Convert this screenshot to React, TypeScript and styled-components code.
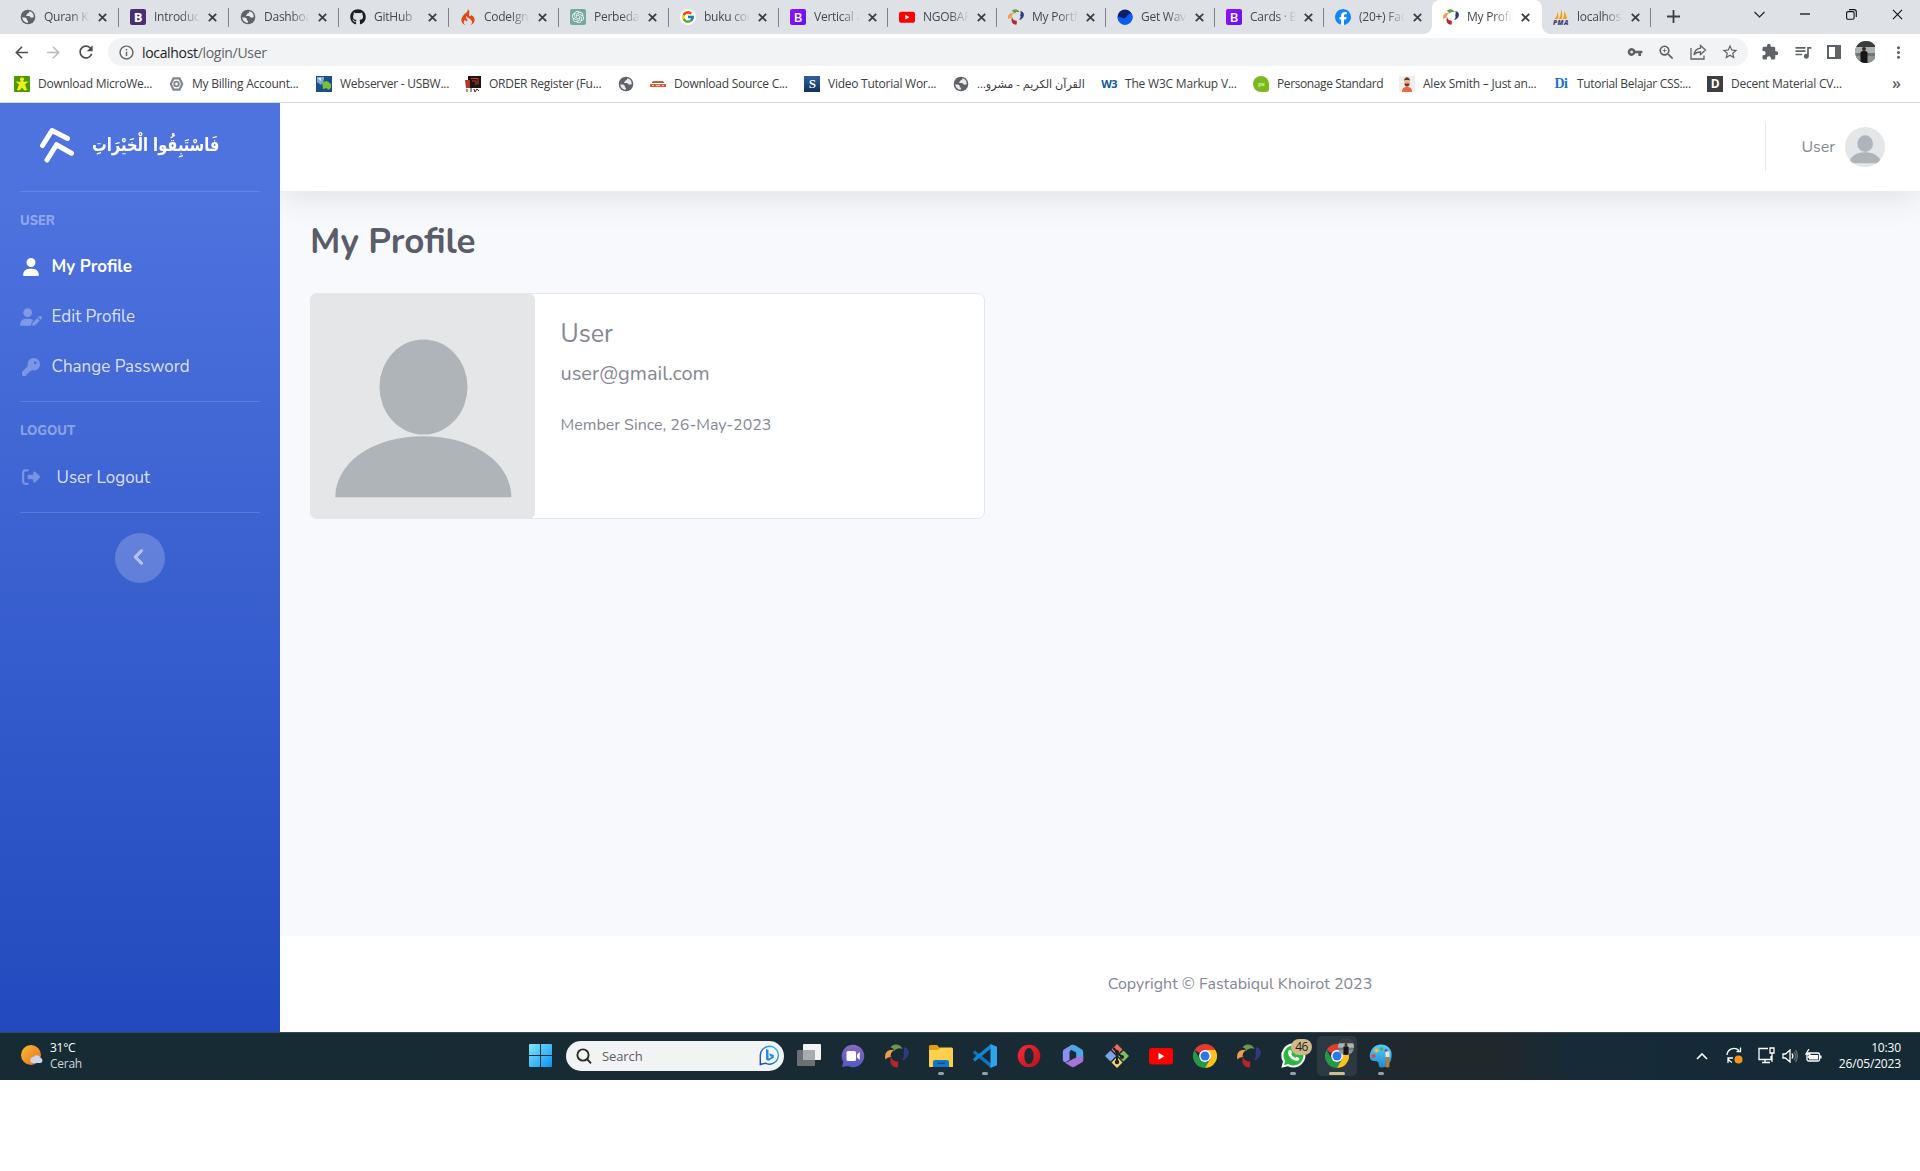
import React from 'react';
import styled, { createGlobalStyle, css } from 'styled-components';
import {
  MdArrowBack, MdArrowForward, MdRefresh, MdInfoOutline, MdVpnKey, MdZoomIn, MdStarBorder,
  MdExtension, MdQueueMusic, MdMoreVert,
} from 'react-icons/md';
import { FaUser, FaUserPen, FaKey, FaRightFromBracket, FaAngleLeft, FaGithub, FaFacebook } from 'react-icons/fa6';
import { FcGoogle } from 'react-icons/fc';
import { SiCodeigniter, SiOpenai } from 'react-icons/si';

const uiFont = `'Segoe UI', 'Open Sans', 'Noto Sans', sans-serif`;
const pageFont = `'Nunito', 'Lato', sans-serif`;

const GlobalStyle = createGlobalStyle`
  *, *::before, *::after { box-sizing: border-box; }
  body { margin: 0; background: #fff; font-family: ${uiFont}; }
  svg { display: block; flex-shrink: 0; }
`;

const Screen = styled.div`
  width: 1920px;
  height: 1171px;
  display: flex;
  flex-direction: column;
  background: #fff;
  overflow: hidden;
`;

/* ---------- Browser chrome ---------- */

const TabStrip = styled.div`
  height: 34px;
  flex: none;
  display: flex;
  background: #dee1e6;
  padding-left: 8px;
`;

const Tab = styled.div<{ $w: number; $active?: boolean; $line: boolean }>`
  position: relative;
  width: ${p => p.$w}px;
  flex: none;
  height: 34px;
  display: flex;
  align-items: center;
  padding: 0 7px 0 11px;
  gap: 8px;
  &:first-child { padding-left: 12px; }
  ${p => p.$active && css`
    background: #fff;
    border-radius: 8px 8px 0 0;
    &::before, &::after {
      content: '';
      position: absolute;
      bottom: 0;
      width: 8px;
      height: 8px;
    }
    &::before { left: -8px; background: radial-gradient(circle at 0 0, transparent 7.5px, #fff 8px); }
    &::after { right: -8px; background: radial-gradient(circle at 100% 0, transparent 7.5px, #fff 8px); }
  `}
  ${p => p.$line && css`
    background: linear-gradient(#80848a, #80848a) right 0 top 8px / 1px 19px no-repeat;
  `}
`;

const TabTitle = styled.span`
  width: 46px;
  flex: none;
  font-size: 12px;
  line-height: 16px;
  letter-spacing: -0.25px;
  color: #45494d;
  white-space: nowrap;
  overflow: hidden;
  mask-image: linear-gradient(90deg, #000 58%, transparent 100%);
`;

const Spacer = styled.div`
  flex: 1;
`;

const WindowButton = styled.div<{ $w: number; $h?: number }>`
  width: ${p => p.$w}px;
  height: ${p => p.$h ?? 28}px;
  display: flex;
  align-items: center;
  justify-content: center;
`;

const Toolbar = styled.div`
  height: 36px;
  flex: none;
  display: flex;
  align-items: center;
  padding: 0 12px 0 12px;
  color: #5f6368;
`;

const NavButton = styled.div<{ $dim?: boolean }>`
  width: 32px;
  display: flex;
  justify-content: flex-start;
  color: ${p => (p.$dim ? '#babcbe' : '#4a4d51')};
`;

const Omnibox = styled.div`
  width: 1641px;
  height: 28px;
  border-radius: 14px;
  background: #f1f3f4;
  display: flex;
  align-items: center;
  padding: 0 9px 0 10px;
  font-size: 14px;
  color: #5f6368;
`;

const Url = styled.span`
  margin-left: 7px;
  letter-spacing: -0.32px;
  b { font-weight: 400; color: #202124; }
`;

const OmniIcons = styled.div`
  margin-left: auto;
  display: flex;
  gap: 14px;
  align-items: center;
`;

const ToolIcons = styled.div`
  margin-left: 13px;
  display: flex;
  align-items: center;
  gap: 14px;
  svg:last-child { margin-left: -2px; }
`;

const ProfilePhoto = styled.div`
  width: 22px;
  height: 22px;
  border-radius: 50%;
  overflow: hidden;
`;

const BookmarkBar = styled.div`
  height: 33px;
  flex: none;
  display: flex;
  align-items: center;
  padding: 0 0 5px 14px;
  border-bottom: 1px solid #d5d8dc;
`;

const Bookmark = styled.div<{ $w: number }>`
  width: ${p => p.$w}px;
  flex: none;
  display: flex;
  align-items: center;
  gap: 8px;
`;

const BookmarkLabel = styled.span<{ $ls: number; $rtl?: boolean }>`
  font-size: ${p => (p.$rtl ? 11.2 : 12)}px;
  line-height: 16px;
  white-space: nowrap;
  letter-spacing: ${p => p.$ls}px;
  color: #3c4043;
  direction: ${p => (p.$rtl ? 'rtl' : 'ltr')};
  font-family: ${p => (p.$rtl ? `'Open Sans', 'DejaVu Sans', sans-serif` : uiFont)};
`;

const More = styled.span`
  margin: -2px 0 0 47px;
  font-size: 16px;
  font-weight: 600;
  line-height: 16px;
  color: #5f6368;
`;

/* ---------- Page ---------- */

const Page = styled.div`
  height: 929px;
  flex: none;
  display: flex;
  font-family: ${pageFont};
  color: #858796;
`;

const Sidebar = styled.nav`
  width: 280px;
  flex: none;
  display: flex;
  flex-direction: column;
  padding: 0 20px;
  background: linear-gradient(180deg, #4e73df 10%, #224abe 100%);
`;

const Brand = styled.div`
  height: 88px;
  flex: none;
  display: flex;
  align-items: center;
  padding: 0 0 4px 19px;
  gap: 17px;
`;

const BrandText = styled.span`
  direction: rtl;
  font: 700 18px/30px 'DejaVu Sans', sans-serif;
  color: #fff;
  white-space: nowrap;
  transform: scaleX(0.815);
  transform-origin: 0 50%;
`;

const Divider = styled.hr<{ $mt?: number }>`
  width: 240px;
  height: 1px;
  flex: none;
  border: 0;
  margin: ${p => p.$mt ?? 0}px 0 0;
  background: rgba(255, 255, 255, 0.15);
`;

const SideHeading = styled.div`
  height: 50px;
  flex: none;
  padding-top: 20px;
  font-size: 13px;
  line-height: 18px;
  font-weight: 800;
  color: rgba(255, 255, 255, 0.4);
`;

const SideLink = styled.a<{ $active?: boolean; $indent?: boolean }>`
  height: ${p => (p.$indent ? 52 : 50)}px;
  flex: none;
  display: flex;
  align-items: center;
  gap: ${p => (p.$indent ? 14.5 : 9.5)}px;
  font-size: 17px;
  line-height: 24px;
  white-space: nowrap;
  font-weight: ${p => (p.$active ? 700 : 400)};
  color: ${p => (p.$active ? '#fff' : 'rgba(255,255,255,0.8)')};
  svg { color: ${p => (p.$active ? '#fff' : 'rgba(255,255,255,0.3)')}; }
`;

const LinkIcon = styled.span<{ $up?: number }>`
  width: 22px;
  padding-bottom: ${p => p.$up ?? 0}px;
  display: flex;
  justify-content: center;
`;

const Toggle = styled.button`
  width: 50px;
  height: 50px;
  flex: none;
  margin: 20px auto 0;
  padding: 0 3px 3px 0;
  border: 0;
  border-radius: 50%;
  display: flex;
  align-items: center;
  justify-content: center;
  background: rgba(255, 255, 255, 0.2);
  color: rgba(255, 255, 255, 0.5);
  svg { stroke: currentColor; stroke-width: 14px; }
`;

const Main = styled.main`
  flex: 1;
  display: flex;
  flex-direction: column;
  background: #f8f9fc;
  overflow: hidden;
`;

const Topbar = styled.header`
  height: 88px;
  flex: none;
  display: flex;
  align-items: center;
  justify-content: flex-end;
  padding: 0 35px 0 0;
  background: #fff;
  box-shadow: 0 3px 35px rgba(58, 59, 69, 0.15);
`;

const TopDivider = styled.div`
  width: 1px;
  height: 48px;
  margin-right: 35.5px;
  background: #e3e6f0;
`;

const TopUser = styled.span`
  margin-right: 10px;
  font-size: 16px;
`;

const RoundAvatar = styled.div`
  width: 40px;
  height: 40px;
  border-radius: 50%;
  overflow: hidden;
`;

const Content = styled.section`
  flex: 1;
  padding: 30px 30px;
`;

const Title = styled.h1`
  margin: 0 0 30px;
  height: 42px;
  font-size: 35px;
  line-height: 42px;
  font-weight: 700;
  color: #5a5c69;
`;

const Card = styled.div`
  width: 675px;
  height: 226px;
  display: flex;
  border: 1px solid #e3e6f0;
  border-radius: 7px;
  background: #fff;
`;

const CardImage = styled.div`
  width: 225px;
  height: 226px;
  margin: -1px 0 0 -1px;
  border-radius: 7px;
  overflow: hidden;
  flex: none;
`;

const CardBody = styled.div`
  padding: 25px 25px 25px 25.5px;
`;

const CardName = styled.h5`
  margin: 0 0 10px;
  font-size: 25px;
  line-height: 30px;
  font-weight: 400;
`;

const CardText = styled.p<{ $size: number; $lh: number; $mb: number }>`
  margin: 0 0 ${p => p.$mb}px;
  font-size: ${p => p.$size}px;
  line-height: ${p => p.$lh}px;
`;

const Footer = styled.footer`
  height: 96px;
  flex: none;
  display: flex;
  align-items: center;
  justify-content: center;
  padding-left: 280px;
  background: #fff;
  font-size: 16px;
`;

/* ---------- Taskbar ---------- */

const Taskbar = styled.div`
  height: 48px;
  flex: none;
  display: flex;
  align-items: center;
  padding-bottom: 2px;
  border-top: 1px solid #3b474e;
  background: linear-gradient(90deg, #172b34 0%, #182b34 45%, #192a34 68%, #20282b 74%, #20282b 78%, #162a38 82%, #142a34 100%);
  color: #fff;
  font-size: 12px;
`;

const Weather = styled.div`
  width: 529px;
  padding-left: 20px;
  display: flex;
  align-items: center;
  gap: 6px;
  line-height: 16px;
  letter-spacing: -0.25px;
  span { display: block; color: #cfd6d9; }
`;

const SearchBox = styled.div`
  width: 218px;
  height: 30px;
  margin-left: 14px;
  margin-right: 3px;
  border-radius: 15px;
  background: #f1f3f5;
  display: flex;
  align-items: center;
  padding: 0 4px 0 10px;
  font-size: 13px;
  letter-spacing: -0.1px;
  color: #5f6062;
  span { margin-left: 10px; flex: 1; }
`;

const TaskButton = styled.div<{ $active?: boolean }>`
  position: relative;
  width: 40px;
  height: 40px;
  margin: 0 2px;
  border-radius: 5px;
  display: flex;
  align-items: center;
  justify-content: center;
  background: ${p => (p.$active ? 'rgba(255,255,255,0.08)' : 'transparent')};
`;

const RunMark = styled.i<{ $active?: boolean }>`
  position: absolute;
  bottom: 1px;
  left: 50%;
  width: ${p => (p.$active ? 16 : 6)}px;
  height: 3px;
  border-radius: 2px;
  transform: translateX(-50%);
  background: ${p => (p.$active ? '#d3bd8c' : '#9aa1a5')};
`;

const Badge = styled.b`
  position: absolute;
  left: 18px;
  top: 3px;
  width: 21px;
  height: 16px;
  border-radius: 8px;
  background: #cdb888;
  color: #1d1b16;
  font-size: 12px;
  font-weight: 400;
  line-height: 16px;
  text-align: center;
  letter-spacing: -0.6px;
`;

const MiniPhoto = styled.div`
  position: absolute;
  left: 21px;
  top: 3px;
  width: 16px;
  height: 16px;
  border-radius: 50%;
  overflow: hidden;
`;

const Tray = styled.div`
  margin-left: auto;
  padding-right: 19px;
  display: flex;
  align-items: center;
`;

const TrayIcon = styled.div<{ $mr: number }>`
  margin-right: ${p => p.$mr}px;
`;

const Clock = styled.div`
  width: 79px;
  text-align: right;
  line-height: 16px;
  letter-spacing: -0.15px;
  white-space: nowrap;
`;

/* ---------- Drawings ---------- */

const GlobeMark = () => (
  <svg width="16" height="16" viewBox="0 0 16 16">
    <circle cx="8" cy="8" r="7.3" fill="#5f6368" />
    <path d="M2.3 8.2c2 .2 3.600.2 4.300 1.300s-.3 1.600.8 2c.9.3.6 1.500.4 2.300C4.700 13.600 2.300 11.200 2.300 8.200zM9.500 2.300c-.4 1-.3 1.900-1.600 2-1 .1-.5 1.500-1.500 1.600-.6.1-.4 1 .2 1.100 1.500.2 2.800-.2 3.500.8.5.9 1.200 1 2.200.8.7-.1 1.200-.2 1.400-.7A5.800 5.800 0 0 0 9.500 2.300z" fill="#e8eaed" />
  </svg>
);

const NewBs = styled.span`
  width: 16px;
  height: 16px;
  flex: none;
  border-radius: 2px;
  background: linear-gradient(135deg, #9013fe, #6610f2);
  color: #fff;
  font: 600 13px/16px 'Open Sans', sans-serif;
  text-align: center;
`;
const OldBs = styled(NewBs)`
  background: #4b2e73;
  font-weight: 700;
`;

const Letter = styled.span<{ $bg: string; $fg: string; $font?: string; $size?: number; $radius?: string }>`
  width: 16px;
  height: 16px;
  flex: none;
  background: ${p => p.$bg};
  color: ${p => p.$fg};
  border-radius: ${p => p.$radius ?? '0'};
  font: 700 ${p => p.$size ?? 13}px/16px ${p => p.$font ?? `'Open Sans', sans-serif`};
  text-align: center;
  letter-spacing: -0.6px;
`;

const White = styled.span`
  width: 16px;
  height: 16px;
  flex: none;
  border-radius: 50%;
  background: #fff;
  display: flex;
  align-items: center;
  justify-content: center;
`;

const GptTile = styled.span`
  width: 16px;
  height: 16px;
  flex: none;
  border-radius: 2px;
  background: #74aa9c;
  display: flex;
  align-items: center;
  justify-content: center;
`;

const YouTube = ({ w }: { w: number }) => (
  <svg width={w} height={w} viewBox="0 0 24 24">
    <rect x="0" y="4" width="24" height="16.500" rx="3" fill="#f00" />
    <path d="M9.500 8.700v7l6-3.500z" fill="#fff" />
  </svg>
);

const Pinwheel = ({ w }: { w: number }) => (
  <svg width={w} height={w} viewBox="0 0 24 24">
    <path d="M5.500 3.500C8 -.5 15-.8 17.500 5c-3-1.400-6-.6-8.500 2C8.800 4.800 7.500 3.700 5.500 3.500z" fill="#6b9a4a" />
    <path d="M.5 15.500C-1.200 8.500 3 4.600 9 6.300 5.800 8.500 5.300 10.500 5.800 13c-2.200-.1-3.800.8-5.300 2.500z" fill="#eaa04a" />
    <path d="M6.200 12c.3 3.700 2.500 5.300 6.800 5.600.5 2.300.3 4.400-.5 6C7 23.800 3.500 18.500 6.200 12z" fill="#b5262b" />
    <path d="M18.500 3c4.800.8 6.800 5 4.300 9.200-1.300 2.300-3.500 3.700-6.300 4 2.300-2.300 3-4.600 1.800-6.900.8-1.900.9-4 .2-6.300z" fill="#2f3a80" />
  </svg>
);

const WavesIcon = () => (
  <svg width="16" height="16" viewBox="0 0 16 16">
    <circle cx="8" cy="8" r="7.500" fill="#0b1f6b" />
    <path d="M.6 8.200C3 6.600 5 10 7.500 9.300 10 8.600 10.500 4.500 14.500 4.300A7.500 7.500 0 1 1 .6 8.200z" fill="#0a5cf5" />
  </svg>
);

const PmaIcon = () => (
  <svg width="16" height="16" viewBox="0 0 16 16">
    <path d="M4.500 2.500c1 2.500 1 5 .5 7.500H1.500C3.500 8 4.500 5.500 4.500 2.500zM8 0c1.500 3 1.500 7 .8 10H5.700C7.600 7 8.300 4 8 0zM11 2.500c2 2 2.800 5 2.800 7.500H9.500C11 8 11.300 5.500 11 2.500z" fill="#f89c0e" />
    <text x="0" y="15.500" fontFamily="Open Sans, sans-serif" fontStyle="italic" fontWeight="800" fontSize="6.500" fill="#3d3f77" textLength="15.500">PMA</text>
  </svg>
);

const Cross = ({ w = 9, sw = 1.8, color = '#3c4043' }: { w?: number; sw?: number; color?: string }) => (
  <svg width={w} height={w} viewBox="0 0 9 9" stroke={color} strokeWidth={sw}>
    <path d="M.8.8l7.400 7.400M8.200.8L.8 8.200" />
  </svg>
);

const Photo = () => (
  <svg width="100%" height="100%" viewBox="0 0 22 22">
    <rect width="22" height="22" fill="#6f7772" />
    <rect width="22" height="6" fill="#3b3d3c" />
    <rect x="0" y="6" width="22" height="6" fill="#aab2b4" />
    <rect x="0" y="15" width="22" height="7" fill="#8c968f" />
    <rect x="9" y="6" width="4" height="4" rx="2" fill="#3a2b26" />
    <path d="M7.500 22V11.500c0-2 7-2 7 0V22z" fill="#16161a" />
  </svg>
);

const AvatarArt = () => (
  <svg width="100%" height="100%" viewBox="0 0 225 226" preserveAspectRatio="none">
    <rect width="225" height="226" fill="#e4e6e7" />
    <ellipse cx="113.500" cy="94" rx="44" ry="47.500" fill="#aeb4b7" />
    <path d="M25.300 204.300C25.300 171 61 143.300 113.300 143.300S201.300 171 201.300 204.300z" fill="#aeb4b7" />
  </svg>
);

const BrandMark = () => (
  <svg width="36" height="36" viewBox="0 0 36 36" fill="none" stroke="#fff" strokeWidth="5" strokeLinecap="round" strokeLinejoin="round">
    <path d="M3.500 18.500L13 3.500L28.500 11.500" />
    <path d="M8 33L17.500 17.700L32.500 26.200" />
  </svg>
);

const ChromeLogo = ({ w }: { w: number }) => (
  <svg width={w} height={w} viewBox="0 0 24 24">
    <path d="M12 12L1.600 6A12 12 0 0 1 22.400 6z" fill="#e33b2e" />
    <path d="M1.600 6L6.800 15 12 18l4.200-.600L12 24A12 12 0 0 1 1.600 6z" fill="#249a45" />
    <path d="M12 12l5.200 3L12 24A12 12 0 0 0 22.400 6H12z" fill="#fcc31e" />
    <circle cx="12" cy="12" r="5.900" fill="#fff" />
    <circle cx="12" cy="12" r="4.500" fill="#2b78ea" />
  </svg>
);

const WindowsLogo = () => (
  <svg width="23" height="23" viewBox="0 0 23 23">
    <defs><linearGradient id="win" x1="0" y1="0" x2="1" y2="1"><stop offset="0" stopColor="#7fe6fd" /><stop offset="1" stopColor="#0a93f5" /></linearGradient></defs>
    <path d="M1 0h10v11H0V1a1 1 0 0 1 1-1zM12 0h10a1 1 0 0 1 1 1v10H12zM0 12h11v11H1a1 1 0 0 1-1-1zM12 12h11v10a1 1 0 0 1-1 1H12z" fill="url(#win)" />
  </svg>
);

const BingLogo = () => (
  <svg width="21" height="21" viewBox="0 0 21 21">
    <defs><linearGradient id="bing" x1="1" y1="0" x2="0" y2="1"><stop offset="0" stopColor="#3cc3ee" /><stop offset="1" stopColor="#1c3fae" /></linearGradient></defs>
    <path d="M10.500 1.200a9 9 0 1 1-4.300 17L1.300 19.500V10.500a9.200 9.200 0 0 1 9.200-9.300z" fill="#f5faff" stroke="url(#bing)" strokeWidth="1.400" />
    <path d="M7 4l2.500 1v8.500l3-1.500-1.500-1-1-2.800 4.800 1.800v2.700l-5.500 3.300L7 14.500z" fill="#2a8ae6" />
  </svg>
);

const TaskView = () => (
  <svg width="24" height="23" viewBox="0 0 24 23">
    <rect x="6" y="0" width="18" height="16" rx="1" fill="#f2f3f4" />
    <rect x="0" y="6" width="18" height="16" rx="1" fill="#6c7072" />
    <rect x="6" y="6" width="12" height="10" fill="#a9acae" />
  </svg>
);

const ChatLogo = () => (
  <svg width="24" height="24" viewBox="0 0 24 24">
    <defs><linearGradient id="chat" x1="0" y1="0" x2="0" y2="1"><stop offset="0" stopColor="#8a68bd" /><stop offset="1" stopColor="#5259c9" /></linearGradient></defs>
    <path d="M12 .8A11.200 11.200 0 1 1 7 22L1 23l1.300-5.200A11.200 11.200 0 0 1 12 .8z" fill="url(#chat)" />
    <rect x="5.500" y="7" width="9.500" height="10" rx="1.500" fill="#fff" />
    <path d="M16 10.500L18.800 8v8L16 13.500z" fill="#fff" />
  </svg>
);

const Folder = () => (
  <svg width="24" height="22" viewBox="0 0 24 22">
    <path d="M0 1.500A1.500 1.500 0 0 1 1.500 0H8l2.500 2.500V6H0z" fill="#e0a010" />
    <path d="M0 5h9l2-2.500h11.500A1.500 1.500 0 0 1 24 4v18H0z" fill="#fcd04b" />
    <path d="M4 22v-5a2 2 0 0 1 2-2h12a2 2 0 0 1 2 2v5z" fill="#1377c8" />
    <rect x="8" y="17.500" width="8" height="1.500" rx=".7" fill="#0b4f92" />
  </svg>
);

const CodeLogo = () => (
  <svg width="24" height="24" viewBox="0 0 24 24">
    <path d="M0 8.200l2-1.600L18 19.500V24L1 9.900z" fill="#0f75bb" />
    <path d="M0 15.800l2 1.600L18 4.500V0L1 14.100z" fill="#1485cf" />
    <path d="M17.500 0L24 2.800v18.400L17.500 24z" fill="#2ca5ee" />
  </svg>
);

const OperaLogo = () => (
  <svg width="24" height="24" viewBox="0 0 24 24">
    <defs><linearGradient id="op" x1="0" y1="0" x2="1" y2="1"><stop offset="0" stopColor="#ff2a35" /><stop offset="1" stopColor="#b3121d" /></linearGradient></defs>
    <path fillRule="evenodd" d="M12 .7a11.300 11.300 0 1 0 0 22.600 11.300 11.300 0 0 0 0-22.600zm0 3.300c2.800 0 4.600 3.500 4.600 8s-1.800 8-4.600 8-4.600-3.500-4.600-8S9.200 4 12 4z" fill="url(#op)" />
  </svg>
);

const M365Logo = () => (
  <svg width="22" height="24" viewBox="0 0 22 24">
    <path d="M8.500 1.500L2 5.500A3 3 0 0 0 .8 8v7.500c0 2 1.500 3 3 2.500l3.700-2V8.500c0-1.500 1-2.500 4-4.500 1-1-1-3.500-3-2.500z" fill="#8a8ff0" />
    <path d="M9 1.200c1.500-.7 3-.5 4.500.4L19.500 5.300c1 .7 1.700 1.700 1.700 3V15c0 1.500-1 2.500-2 1.500l-5-3V8.500L7.500 5c0-1.500 0-3 1.500-3.800z" fill="#49a8e6" />
    <path d="M21.200 11.500V16c0 1-.5 2-1.500 2.500L13 22.600c-1.300.7-2.700.7-4 0l-6.500-4c2 .3 4-1 5.500-2l6.200-3.200z" fill="#a673d8" />
  </svg>
);

const GitLogo = () => (
  <svg width="26" height="26" viewBox="0 0 26 26">
    <path d="M13 1l5.500 5.500L13 12 7.500 6.500z" fill="#ec6a5e" />
    <path d="M6.500 7.500L12 13l-5.500 5.500L1 13z" fill="#7aa5e8" />
    <path d="M19.500 7.500L25 13l-5.500 5.500L14 13z" fill="#7fc05e" />
    <path d="M13 14l5.500 5.500L13 25l-5.500-5.500z" fill="#f3d266" />
    <path d="M9.500 5l3.500 4v10M13 9.500l5 4.500" stroke="#1c2328" strokeWidth="2" fill="none" />
    <circle cx="13" cy="9" r="2" fill="#1c2328" /><circle cx="13" cy="19" r="2.200" fill="#1c2328" /><circle cx="18" cy="14" r="2" fill="#1c2328" />
  </svg>
);

const WhatsAppLogo = () => (
  <svg width="25" height="25" viewBox="0 0 25 25">
    <path d="M12.500.5A12 12 0 1 1 7 23.200L.3 24.800 2 18.500A12 12 0 0 1 12.500.5z" fill="#fff" />
    <path d="M12.500 2.500a10 10 0 1 1-5.200 18.600L3 22.200l1.200-4.200a10 10 0 0 1 8.300-15.500z" fill="#2cb742" />
    <path d="M8.300 7c.6-.5 1.400-.4 1.700.3l.9 2c.2.600-.9 1.300-.7 1.800.8 1.700 2.200 3 4 3.700.6.2 1.200-1.200 1.800-.9l2 1c.6.300.5 1.400 0 2-1 1-2.600 1.200-4 .7-3.500-1.200-5.800-3.500-6.800-6.500-.4-1.400 0-3.100 1.100-4.100z" fill="#fff" />
  </svg>
);

const PaintLogo = () => (
  <svg width="24" height="24" viewBox="0 0 24 24">
    <defs><linearGradient id="pt" x1="0" y1="0" x2="0" y2="1"><stop offset="0" stopColor="#58cdf5" /><stop offset="1" stopColor="#1e88d2" /></linearGradient></defs>
    <path d="M12 .5c6.500 0 10.700 4.500 10.700 10C22.700 18 19 23.500 12.500 23.500c-4 0-2-4-3.500-5.500S1 18.500.8 12.500C.7 6 5.500.5 12 .5z" fill="url(#pt)" />
    <circle cx="4.500" cy="12" r="2" fill="#e0483b" /><circle cx="7.500" cy="6.500" r="2" fill="#f2c230" /><circle cx="12.500" cy="5" r="1.700" fill="#4fb44a" /><circle cx="17" cy="6.500" r="1.500" fill="#6a4cc2" />
    <path d="M16.500 7.500h4V13h-4z" fill="#e9e4d8" /><path d="M17 13h3l.5 9c0 2-4 2-4 0z" fill="#b57a34" />
  </svg>
);

const Line = ({ w, h = w, children, sw = 1.3, color = '#fff' }: { w: number; h?: number; sw?: number; color?: string; children: React.ReactNode }) => (
  <svg width={w} height={h} viewBox={`0 0 ${w} ${h}`} fill="none" stroke={color} strokeWidth={sw}>{children}</svg>
);

/* ---------- Data ---------- */

const tabs: { title: string; icon: React.ReactNode; w: number; active?: boolean; line?: boolean }[] = [
  { title: 'Quran Ka', icon: <GlobeMark />, w: 111 },
  { title: 'Introduct', icon: <OldBs>B</OldBs>, w: 110 },
  { title: 'Dashboar', icon: <GlobeMark />, w: 110 },
  { title: 'GitHub', icon: <FaGithub size={16} color="#1b1f23" />, w: 110 },
  { title: 'CodeIgni', icon: <SiCodeigniter size={16} color="#dd4814" />, w: 110 },
  { title: 'Perbedaa', icon: <GptTile><SiOpenai size={12} color="#fff" /></GptTile>, w: 110 },
  { title: 'buku cod', icon: <White><FcGoogle size={14} /></White>, w: 110 },
  { title: 'Vertical a', icon: <NewBs>B</NewBs>, w: 109 },
  { title: 'NGOBAR', icon: <YouTube w={16} />, w: 109 },
  { title: 'My Portfo', icon: <Pinwheel w={16} />, w: 109 },
  { title: 'Get Wave', icon: <WavesIcon />, w: 109 },
  { title: 'Cards · B', icon: <NewBs>B</NewBs>, w: 109 },
  { title: '(20+) Fac', icon: <White><FaFacebook size={16} color="#1386f5" /></White>, w: 108, line: false },
  { title: 'My Profil', icon: <Pinwheel w={16} />, w: 110, active: true, line: false },
  { title: 'localhost', icon: <PmaIcon />, w: 109 },
];

const bookmarks: { label?: string; icon: React.ReactNode; w: number; ls?: number; rtl?: boolean }[] = [
  {
    label: 'Download MicroWe...', w: 155, icon: (
      <svg width="16" height="16"><rect width="16" height="16" rx="1" fill="#4d9a06" /><circle cx="8" cy="3.300" r="2" fill="#f2ee1c" /><path d="M8 4.500l2 1.200 4.500-.2-3.500 3 2 5.500-2.500.500L8 11.500l-2.500 3-2.500-.500 2-5.500-3.500-3 4.500.200z" fill="#f2ee1c" /></svg>
    ),
  },
  {
    label: 'My Billing Account...', w: 147, ls: -0.24, icon: (
      <svg width="15" height="16" fill="none" stroke="#80868b" strokeWidth="2.200"><path d="M4.500 2.300h6L13.200 8 10.500 13.700h-6L1.800 8z" /><circle cx="7.500" cy="8" r="2.300" strokeWidth="1.800" /></svg>
    ),
  },
  {
    label: 'Webserver - USBW...', w: 149, icon: (
      <svg width="16" height="16"><rect width="16" height="16" fill="#1b4f8c" /><path d="M1 1h7v3L5 9 1 6z" fill="#7fa9dc" /><path d="M6 6l5-1 4 3v4l-3 2-1-2-4 1z" fill="#7cbf3a" /><path d="M2 2h3v3z" fill="#fff" /></svg>
    ),
  },
  {
    label: 'ORDER Register (Fu...', w: 153, icon: (
      <svg width="16" height="16"><rect x="3" width="13" height="12" fill="#1d1414" /><path d="M0 4h5v8H1z" fill="#b5342c" /><path d="M6 2.500h7v6M7 5h4v4" stroke="#d6362e" fill="none" /><path d="M2 13v3M6 12v4M9 13l1 3 2-3 2 2" stroke="#3a2a28" fill="none" /></svg>
    ),
  },
  { w: 32, icon: <GlobeMark /> },
  {
    label: 'Download Source C...', w: 154, icon: (
      <svg width="16" height="16"><path d="M3 5h10l1 2H2zM0 8h16v3H0z" fill="#e0592f" /><path d="M2 6.500h12" stroke="#7b6a62" /><path d="M2 9.500h2M6 9.500h4M12 9.500h2" stroke="#fbd3c4" /></svg>
    ),
  },
  { label: 'Video Tutorial Wor...', w: 149, icon: <Letter $bg="linear-gradient(#2f62a0,#12305c)" $fg="#fff" $font="'Liberation Serif', serif">S</Letter> },
  { label: 'القرآن الكريم - مشرو...', w: 148, rtl: true, icon: <GlobeMark /> },
  { label: 'The W3C Markup V...', w: 152, ls: -0.2, icon: <Letter $bg="transparent" $fg="#0a5a9c" $size={11}>W3</Letter> },
  { label: 'Personage Standard', w: 146, ls: -0.4, icon: <Letter $bg="#7cb81f" $fg="#d4ecaa" $size={6} $radius="8px 8px 3px 8px">px</Letter> },
  {
    label: 'Alex Smith – Just an...', w: 154, ls: -0.22, icon: (
      <svg width="16" height="16"><rect width="16" height="16" fill="#efeeec" /><path d="M3 16c0-4 2-5 5-5s5 1 5 5z" fill="#ea6845" /><rect x="5.500" y="3" width="5" height="8" rx="2.500" fill="#f0b184" /><path d="M5 5c0-5 6-5 6 0L10 4H6zM5.500 7.500h5c0 4-5 4-5 0z" fill="#6b3a20" /></svg>
    ),
  },
  { label: 'Tutorial Belajar CSS:...', w: 154, ls: -0.32, icon: <Letter $bg="transparent" $fg="#1e73c9" $size={14} $font="'Liberation Serif', serif">Di</Letter> },
  { label: 'Decent Material CV...', w: 138, icon: <Letter $bg="#3f3f41" $fg="#fff" $size={12}>D</Letter> },
];

export default function App() {
  return (
    <>
      <GlobalStyle />
      <Screen>
        <TabStrip>
          {tabs.map(t => (
            <Tab key={t.title + t.w} $w={t.w} $active={t.active} $line={t.line !== false}>
              {t.icon}
              <TabTitle>{t.title}</TabTitle>
              <Cross />
            </Tab>
          ))}
          <WindowButton $w={44} $h={33}><Line w={13} sw={1.8} color="#3c4043"><path d="M6.500 0v13M0 6.500h13" /></Line></WindowButton>
          <Spacer />
          <WindowButton $w={46}><Line w={11} h={7} sw={1.2} color="#222"><path d="M.5 1l5 5 5-5" /></Line></WindowButton>
          <WindowButton $w={46}><Line w={10} h={2} color="#111"><path d="M0 1h10" /></Line></WindowButton>
          <WindowButton $w={46}><Line w={11} sw={1.1} color="#111"><rect x=".6" y="2.600" width="7.500" height="7.600" rx="1.500" /><path d="M3 .6h5a2.300 2.300 0 0 1 2.300 2.300V8" /></Line></WindowButton>
          <WindowButton $w={46}><Cross w={11} sw={0.9} color="#111" /></WindowButton>
        </TabStrip>

        <Toolbar>
          <NavButton><MdArrowBack size={19} /></NavButton>
          <NavButton $dim><MdArrowForward size={19} /></NavButton>
          <NavButton><MdRefresh size={20} /></NavButton>
          <Omnibox>
            <MdInfoOutline size={17} />
            <Url><b>localhost</b>/login/User</Url>
            <OmniIcons>
              <MdVpnKey size={16} />
              <MdZoomIn size={19} />
              <Line w={17} h={16} sw={1.3} color="#5f6368"><path d="M1 4v11h13v-3.500M10.500 1.500l5 4.500-5 4.500V8C7.500 8 5.300 8.800 4 11c.3-3.500 2.500-6.300 6.500-6.800z" /></Line>
              <MdStarBorder size={18} />
            </OmniIcons>
          </Omnibox>
          <ToolIcons>
            <MdExtension size={18} />
            <MdQueueMusic size={20} />
            <Line w={14} sw={2} color="#5f6368"><rect x="1" y="1" width="12" height="12" /><path d="M9 1h4v12H9z" fill="#5f6368" /></Line>
            <ProfilePhoto><Photo /></ProfilePhoto>
            <MdMoreVert size={19} />
          </ToolIcons>
        </Toolbar>

        <BookmarkBar>
          {bookmarks.map((b, i) => (
            <Bookmark key={i} $w={b.w}>
              {b.icon}
              {b.label && <BookmarkLabel $ls={b.ls ?? -0.25} $rtl={b.rtl}>{b.label}</BookmarkLabel>}
            </Bookmark>
          ))}
          <More>»</More>
        </BookmarkBar>

        <Page>
          <Sidebar>
            <Brand>
              <BrandMark />
              <BrandText>فَاسْتَبِقُوا الْخَيْرَاتِ</BrandText>
            </Brand>
            <Divider />
            <SideHeading>USER</SideHeading>
            <SideLink $active><LinkIcon $up={1}><FaUser size={18} /></LinkIcon>My Profile</SideLink>
            <SideLink><LinkIcon $up={1}><FaUserPen style={{ width: 22, height: 18 }} /></LinkIcon>Edit Profile</SideLink>
            <SideLink><LinkIcon $up={1}><FaKey size={18} /></LinkIcon>Change Password</SideLink>
            <Divider $mt={9} />
            <SideHeading>LOGOUT</SideHeading>
            <SideLink $indent><LinkIcon $up={3}><FaRightFromBracket size={18} /></LinkIcon>User Logout</SideLink>
            <Divider $mt={8} />
            <Toggle><FaAngleLeft size={20} /></Toggle>
          </Sidebar>
          <Main>
            <Topbar>
              <TopDivider />
              <TopUser>User</TopUser>
              <RoundAvatar><AvatarArt /></RoundAvatar>
            </Topbar>
            <Content>
              <Title>My Profile</Title>
              <Card>
                <CardImage><AvatarArt /></CardImage>
                <CardBody>
                  <CardName>User</CardName>
                  <CardText $size={20} $lh={30} $mb={24}>user@gmail.com</CardText>
                  <CardText $size={16} $lh={24} $mb={0}>Member Since, 26-May-2023</CardText>
                </CardBody>
              </Card>
            </Content>
            <Footer>Copyright © Fastabiqul Khoirot 2023</Footer>
          </Main>
        </Page>

        <Taskbar>
          <Weather>
            <svg width="24" height="24" viewBox="0 0 24 24">
              <defs><linearGradient id="sun" x1="0" y1="0" x2="1" y2="1"><stop offset="0" stopColor="#f6c12e" /><stop offset="1" stopColor="#e8682a" /></linearGradient></defs>
              <circle cx="11" cy="11" r="10" fill="url(#sun)" />
              <path d="M12.500 19a3 3 0 0 1 .8-5.900 4 4 0 0 1 7.200.700 2.700 2.700 0 0 1 0 5.200z" fill="#c9d7f2" />
            </svg>
            <div>31°C<span>Cerah</span></div>
          </Weather>
          <WindowsLogo />
          <SearchBox>
            <Line w={16} sw={1.900} color="#2b2b2b"><circle cx="7" cy="7" r="5.600" /><path d="M11 11l4 4.300" /></Line>
            <span>Search</span>
            <BingLogo />
          </SearchBox>
          <TaskButton><TaskView /></TaskButton>
          <TaskButton><ChatLogo /></TaskButton>
          <TaskButton><Pinwheel w={24} /></TaskButton>
          <TaskButton><Folder /><RunMark /></TaskButton>
          <TaskButton><CodeLogo /><RunMark /></TaskButton>
          <TaskButton><OperaLogo /></TaskButton>
          <TaskButton><M365Logo /></TaskButton>
          <TaskButton><GitLogo /></TaskButton>
          <TaskButton><YouTube w={24} /></TaskButton>
          <TaskButton><ChromeLogo w={24} /></TaskButton>
          <TaskButton><Pinwheel w={24} /></TaskButton>
          <TaskButton><WhatsAppLogo /><Badge>46</Badge><RunMark /></TaskButton>
          <TaskButton $active><ChromeLogo w={24} /><MiniPhoto><Photo /></MiniPhoto><RunMark $active /></TaskButton>
          <TaskButton><PaintLogo /><RunMark /></TaskButton>
          <Tray>
            <TrayIcon $mr={18}><Line w={12} h={8} sw={1.6}><path d="M1 7l5-5 5 5" /></Line></TrayIcon>
            <TrayIcon $mr={15}>
              <Line w={17}><path d="M1 8a7 7 0 0 1 12-4.500M14.500.5V4.500h-4M2 16v-5h5M2 11.500a7 7 0 0 0 4 4" /><circle cx="12.500" cy="12.500" r="4" fill="#f7941d" stroke="none" /></Line>
            </TrayIcon>
            <TrayIcon $mr={7}><Line w={17}><path d="M10 1.500H1v11h12V9M4 15.500h8M7 12.500v3M12 1h4v5h-4zM14 6v9" /></Line></TrayIcon>
            <TrayIcon $mr={7}>
              <Line w={16} h={14}><path d="M1 5v4h2.500L8 13V1L3.500 5z" /><path d="M10 4.500c1 1.500 1 3.500 0 5" /><path d="M12 3c2 2.500 2 5.500 0 8M13.500 1c2.500 3.500 2.500 8.500 0 12" stroke="#5d6b73" /></Line>
            </TrayIcon>
            <TrayIcon $mr={0}>
              <Line w={17} h={14}><rect x="2" y="4" width="12.500" height="8" rx="1.500" /><rect x="4" y="6" width="9" height="4.500" fill="#fff" stroke="none" /><path d="M15.500 6.500v3" strokeWidth="2" /><path d="M4 0L1 5h4L3 9" /></Line>
            </TrayIcon>
            <Clock>10:30<br />26/05/2023</Clock>
          </Tray>
        </Taskbar>
      </Screen>
    </>
  );
}
